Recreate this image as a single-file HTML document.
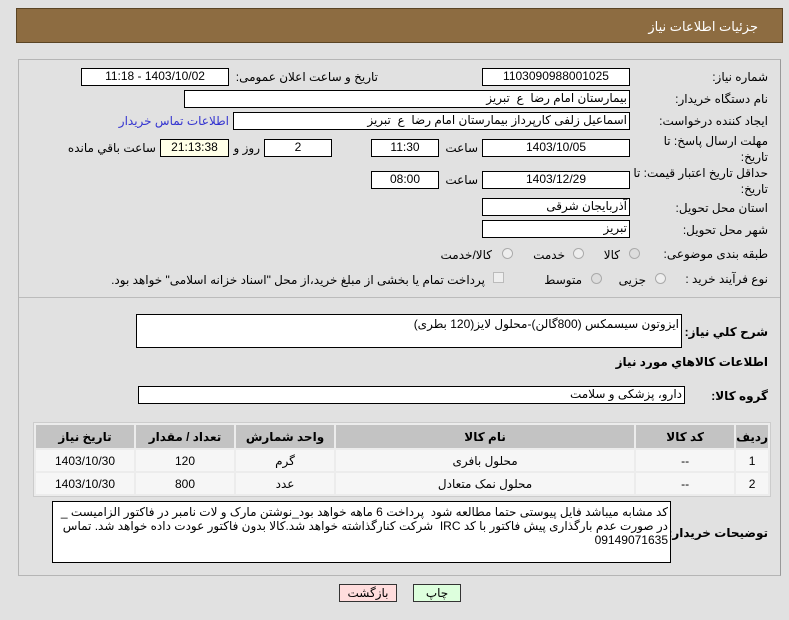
<!DOCTYPE html>
<html><head><meta charset="utf-8"><style>
body{margin:0;width:789px;height:620px;background:#e1e1e1;font-family:"Liberation Sans","DejaVu Sans",sans-serif;font-size:12px;color:#000;position:relative;overflow:hidden}
.a{position:absolute;white-space:nowrap}
.r{direction:rtl;text-align:right}
.box{position:absolute;background:#fff;border:1px solid #000;box-sizing:border-box;direction:rtl;font-size:12px;line-height:15px;padding:0 2px;overflow:hidden;white-space:nowrap}
.c{text-align:center}
.rad{position:absolute;width:11px;height:11px;border:1px solid #aaa;border-radius:50%;background:#eee;box-sizing:border-box}
table{border-collapse:separate;border-spacing:2px;position:absolute;left:33px;top:422px;width:738px;background:#ececec;border:1px solid #ccc;direction:rtl;font-size:12px}
th{background:#c3c3c3;height:23px;font-weight:bold;padding:0}
td{background:#f6f6f6;height:21px;text-align:center;padding:0}
.b{font-weight:bold;font-size:12px}
</style></head><body>
<div class="a" style="left:16px;top:8px;width:767px;height:35px;background:#8d6c41;border:1px solid #5a4424;box-sizing:border-box"></div>
<div class="a" style="right:31px;top:19px;color:#fff;font-size:13px">جزئیات اطلاعات نیاز</div>
<div class="a" style="left:18px;top:59px;width:763px;height:517px;border:1px solid #b5b5b5;border-right-color:#999;box-sizing:border-box"></div>
<div class="a" style="left:19px;top:297px;width:761px;height:1px;background:#bbb"></div>

<div class="a r" style="right:21px;top:70px">شماره نیاز:</div>
<div class="box c" style="left:482px;top:68px;width:148px;height:18px">1103090988001025</div>
<div class="a r" style="right:411px;top:70px">تاریخ و ساعت اعلان عمومی:</div>
<div class="box c" style="left:81px;top:68px;width:148px;height:18px">1403/10/02 - 11:18</div>

<div class="a r" style="right:21px;top:92px">نام دستگاه خریدار:</div>
<div class="box" style="left:184px;top:90px;width:446px;height:18px">بیمارستان امام رضا &nbsp;ع &nbsp;تبریز</div>

<div class="a r" style="right:21px;top:114px">ایجاد کننده درخواست:</div>
<div class="box" style="left:233px;top:112px;width:397px;height:18px">اسماعیل زلفی کارپرداز بیمارستان امام رضا &nbsp;ع &nbsp;تبریز</div>
<div class="a r" style="right:560px;top:114px;color:#3434d0">اطلاعات تماس خریدار</div>

<div class="a r" style="right:21px;top:134px">مهلت ارسال پاسخ: تا</div>
<div class="a r" style="right:21px;top:150px">تاریخ:</div>
<div class="box c" style="left:482px;top:139px;width:148px;height:18px">1403/10/05</div>
<div class="a r" style="right:311px;top:141px">ساعت</div>
<div class="box c" style="left:371px;top:139px;width:68px;height:18px">11:30</div>
<div class="box c" style="left:264px;top:139px;width:68px;height:18px">2</div>
<div class="a r" style="right:529px;top:141px">روز و</div>
<div class="box c" style="left:160px;top:139px;width:69px;height:18px;background:#ffffe8">21:13:38</div>
<div class="a r" style="right:633px;top:141px">ساعت باقي مانده</div>

<div class="a r" style="right:21px;top:166px">حداقل تاریخ اعتبار قیمت: تا</div>
<div class="a r" style="right:21px;top:182px">تاریخ:</div>
<div class="box c" style="left:482px;top:171px;width:148px;height:18px">1403/12/29</div>
<div class="a r" style="right:311px;top:173px">ساعت</div>
<div class="box c" style="left:371px;top:171px;width:68px;height:18px">08:00</div>

<div class="a r" style="right:21px;top:201px">استان محل تحویل:</div>
<div class="box" style="left:482px;top:198px;width:148px;height:18px">آذربایجان شرقی</div>
<div class="a r" style="right:21px;top:223px">شهر محل تحویل:</div>
<div class="box" style="left:482px;top:220px;width:148px;height:18px">تبریز</div>

<div class="a r" style="right:21px;top:247px">طبقه بندی موضوعی:</div>
<div class="rad" style="left:629px;top:248px;background:#ddd"></div>
<div class="a r" style="right:169px;top:248px">کالا</div>
<div class="rad" style="left:573px;top:248px"></div>
<div class="a r" style="right:224px;top:248px">خدمت</div>
<div class="rad" style="left:502px;top:248px"></div>
<div class="a r" style="right:297px;top:248px">کالا/خدمت</div>

<div class="a r" style="right:21px;top:272px">نوع فرآیند خرید :</div>
<div class="rad" style="left:655px;top:273px"></div>
<div class="a r" style="right:143px;top:273px">جزیی</div>
<div class="rad" style="left:591px;top:273px;background:#ddd"></div>
<div class="a r" style="right:207px;top:273px">متوسط</div>
<div class="a" style="left:493px;top:272px;width:11px;height:11px;border:1px solid #bbb;background:#eee;box-sizing:border-box"></div>
<div class="a r" style="right:304px;top:273px">پرداخت تمام یا بخشی از مبلغ خرید،از محل "اسناد خزانه اسلامی" خواهد بود.</div>

<div class="a r b" style="right:21px;top:325px">شرح کلي نیاز:</div>
<div class="box" style="left:136px;top:314px;width:546px;height:34px;padding-top:2px">ایزوتون سیسمکس (800گالن)-محلول لایز(120 بطری)</div>
<div class="a r b" style="right:21px;top:355px">اطلاعات کالاهاي مورد نياز</div>
<div class="a r b" style="right:21px;top:389px">گروه کالا:</div>
<div class="box" style="left:138px;top:386px;width:547px;height:18px">دارو، پزشکی و سلامت</div>

<table>
<tr><th style="width:25px">ردیف</th><th style="width:98px">کد کالا</th><th>نام کالا</th><th style="width:98px">واحد شمارش</th><th style="width:98px">تعداد / مقدار</th><th style="width:98px">تاریخ نیاز</th></tr>
<tr><td>1</td><td>--</td><td>محلول بافری</td><td>گرم</td><td>120</td><td>1403/10/30</td></tr>
<tr><td>2</td><td>--</td><td>محلول نمک متعادل</td><td>عدد</td><td>800</td><td>1403/10/30</td></tr>
</table>

<div class="a r b" style="right:21px;top:526px">توضیحات خریدار:</div>
<div class="box" style="left:52px;top:501px;width:619px;height:62px;white-space:normal;line-height:14px;padding-top:3px">کد مشابه میباشد فایل پیوستی حتما مطالعه شود &nbsp;پرداخت 6 ماهه خواهد بود_نوشتن مارک و لات نامبر در فاکتور الزامیست _ در صورت عدم بارگذاری پیش فاکتور با کد IRC &nbsp;شرکت کنارگذاشته خواهد شد.کالا بدون فاکتور عودت داده خواهد شد. تماس 09149071635</div>

<div class="a c" style="left:339px;top:584px;width:58px;height:18px;background:#fdd;border:1px solid #333;box-sizing:border-box;line-height:16px">بازگشت</div>
<div class="a c" style="left:413px;top:584px;width:48px;height:18px;background:#dfd;border:1px solid #333;box-sizing:border-box;line-height:16px">چاپ</div>
</body></html>
